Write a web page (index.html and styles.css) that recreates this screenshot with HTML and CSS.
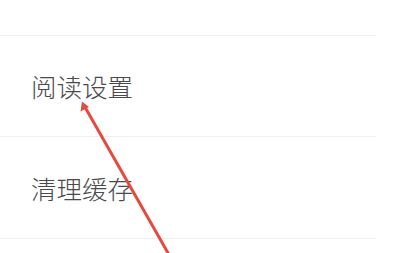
FILE: index.html
```html
<!DOCTYPE html>
<html lang="zh-CN">
<head>
<meta charset="utf-8">
<link rel="stylesheet" href="styles.css">
</head>
<body>
<div class="page">
  <ul class="list">
    <li class="row">消息通知设置</li>
    <li class="row">阅读设置</li>
    <li class="row">清理缓存</li>
  </ul>
  <svg class="arrow" width="394" height="253" viewBox="0 0 394 253">
    <line x1="85.5" y1="108" x2="172" y2="260" stroke="#e8493e" stroke-width="3" stroke-linecap="round"/>
    <polygon points="82,101.5 80.5,111.5 89,107" fill="#e8493e"/>
  </svg>
</div>
</body>
</html>
```
FILE: styles.css
```css
html, body {
  margin: 0;
  padding: 0;
  background: #ffffff;
}
.page {
  position: relative;
  width: 394px;
  height: 253px;
  overflow: hidden;
}
.list {
  list-style: none;
  margin: -65px 0 0 0;
  padding: 0;
  width: 376px;
}
.row {
  height: 100px;
  display: flex;
  align-items: center;
  padding-left: 31px;
  border-bottom: 1px solid #efefef;
  font-family: "Noto Sans CJK SC", "Noto Sans", sans-serif;
  font-size: 25.5px;
  font-weight: 300;
  line-height: 26px;
  color: #4a4a4a;
}
.row:nth-child(3) {
  height: 101px;
}
.arrow {
  position: absolute;
  left: 0;
  top: 0;
}
```
